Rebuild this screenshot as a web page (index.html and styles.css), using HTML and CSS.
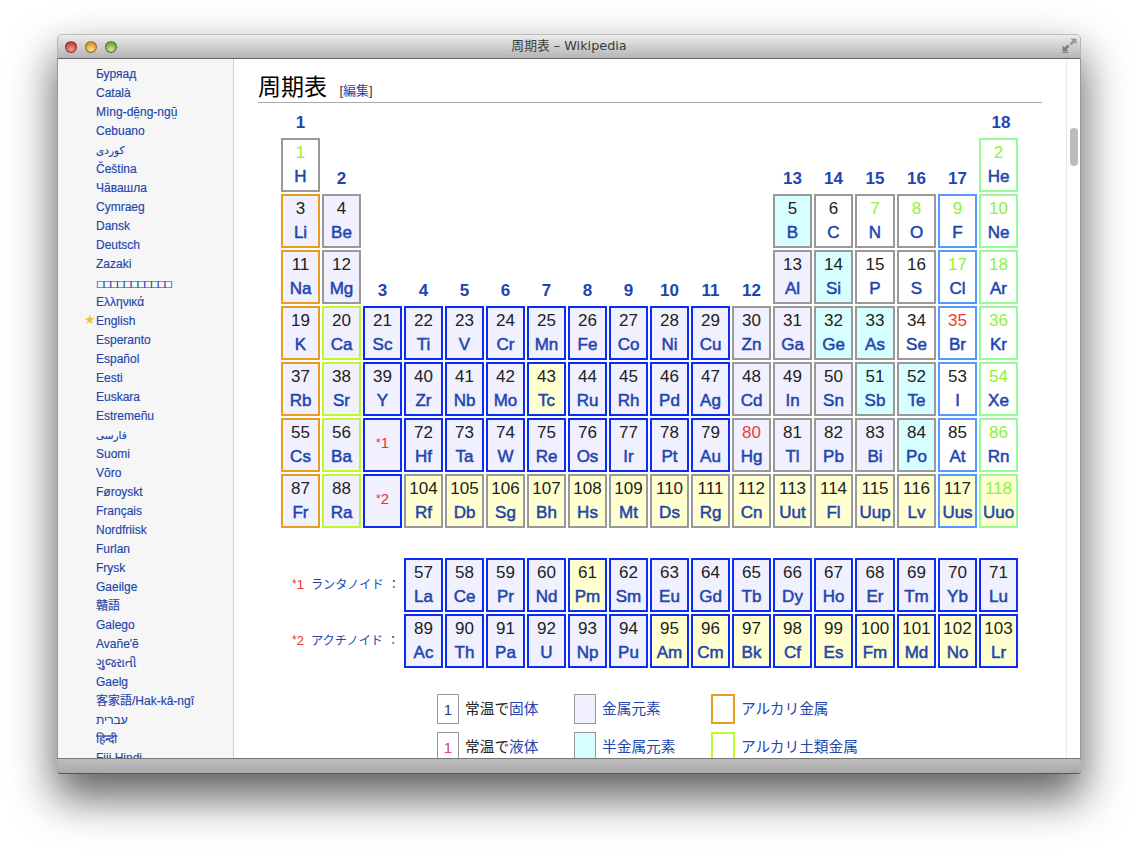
FILE: index.html
```html
<!DOCTYPE html>
<html lang="ja">
<head>
    <meta charset="UTF-8">
    <meta name="viewport" content="width=device-width, initial-scale=1.0">
    <title>周期表 – Wikipedia</title>
    <link rel="stylesheet" href="styles.css">
</head>
<body>
<div class="window">
    <header class="titlebar">
        <div class="lights">
            <span class="light red"></span>
            <span class="light yellow"></span>
            <span class="light green"></span>
        </div>
        <div class="title">周期表 – Wikipedia</div>
        <svg class="fullscreen" width="15" height="15" viewBox="0 0 15 15">
            <path d="M8.500 0.500H14.500V6.500L12.500 4.500 9.500 7.500 7.500 5.500 10.500 2.500Z" fill="#999"/>
            <path d="M6.500 13.500H0.500V7.500L2.500 9.500 5.500 6.500 7.500 8.500 4.500 11.500Z" fill="#7d7d7d"/>
            <path d="M0 14.500H6.500" stroke="#888" fill="none"/>
        </svg>
    </header>
    <div class="main">
        <nav class="sidebar">
            <ul class="langs">
                <li><a>Буряад</a></li>
                <li><a>Català</a></li>
                <li><a>Mìng-dĕ̤ng-ngṳ̄</a></li>
                <li><a>Cebuano</a></li>
                <li><a class="arabic">کوردی</a></li>
                <li><a>Čeština</a></li>
                <li><a>Чӑвашла</a></li>
                <li><a>Cymraeg</a></li>
                <li><a>Dansk</a></li>
                <li><a>Deutsch</a></li>
                <li><a>Zazaki</a></li>
                <li><a class="tofu">□□□□□□□□□□□</a></li>
                <li><a>Ελληνικά</a></li>
                <li class="featured"><span class="star">★</span><a>English</a></li>
                <li><a>Esperanto</a></li>
                <li><a>Español</a></li>
                <li><a>Eesti</a></li>
                <li><a>Euskara</a></li>
                <li><a>Estremeñu</a></li>
                <li><a class="arabic">فارسی</a></li>
                <li><a>Suomi</a></li>
                <li><a>Võro</a></li>
                <li><a>Føroyskt</a></li>
                <li><a>Français</a></li>
                <li><a>Nordfriisk</a></li>
                <li><a>Furlan</a></li>
                <li><a>Frysk</a></li>
                <li><a>Gaeilge</a></li>
                <li><a>贛語</a></li>
                <li><a>Galego</a></li>
                <li><a>Avañe'ẽ</a></li>
                <li><a>ગુજરાતી</a></li>
                <li><a>Gaelg</a></li>
                <li><a>客家語/Hak-kâ-ngî</a></li>
                <li><a>עברית</a></li>
                <li><a>हिन्दी</a></li>
                <li><a>Fiji Hindi</a></li>
            </ul>
        </nav>
        <main class="content">
            <h2 class="heading">周期表 <span class="edit">[<a>編集</a>]</span></h2>
            <div class="ptable">
                <!-- row 0 -->
                <a class="group">1</a><span class="sp16"></span><a class="group last">18</a>
                <!-- period 1 -->
                <div class="el gray"><span class="z gas">1</span><a>H</a></div>
                <a class="group">2</a><span class="sp10"></span>
                <a class="group">13</a><a class="group">14</a><a class="group">15</a><a class="group">16</a><a class="group">17</a>
                <div class="el noble"><span class="z gas">2</span><a>He</a></div>
                <!-- period 2 -->
                <div class="el alkali metal"><span class="z">3</span><a>Li</a></div>
                <div class="el gray metal"><span class="z">4</span><a>Be</a></div>
                <span class="sp10"></span>
                <div class="el gray semi"><span class="z">5</span><a>B</a></div>
                <div class="el gray"><span class="z">6</span><a>C</a></div>
                <div class="el gray"><span class="z gas">7</span><a>N</a></div>
                <div class="el gray"><span class="z gas">8</span><a>O</a></div>
                <div class="el halogen"><span class="z gas">9</span><a>F</a></div>
                <div class="el noble"><span class="z gas">10</span><a>Ne</a></div>
                <!-- period 3 -->
                <div class="el alkali metal"><span class="z">11</span><a>Na</a></div>
                <div class="el gray metal"><span class="z">12</span><a>Mg</a></div>
                <a class="group">3</a><a class="group">4</a><a class="group">5</a><a class="group">6</a><a class="group">7</a>
                <a class="group">8</a><a class="group">9</a><a class="group">10</a><a class="group">11</a><a class="group">12</a>
                <div class="el gray metal"><span class="z">13</span><a>Al</a></div>
                <div class="el gray semi"><span class="z">14</span><a>Si</a></div>
                <div class="el gray"><span class="z">15</span><a>P</a></div>
                <div class="el gray"><span class="z">16</span><a>S</a></div>
                <div class="el halogen"><span class="z gas">17</span><a>Cl</a></div>
                <div class="el noble"><span class="z gas">18</span><a>Ar</a></div>
                <!-- period 4 -->
                <div class="el alkali metal"><span class="z">19</span><a>K</a></div>
                <div class="el earth metal"><span class="z">20</span><a>Ca</a></div>
                <div class="el blue metal"><span class="z">21</span><a>Sc</a></div>
                <div class="el blue metal"><span class="z">22</span><a>Ti</a></div>
                <div class="el blue metal"><span class="z">23</span><a>V</a></div>
                <div class="el blue metal"><span class="z">24</span><a>Cr</a></div>
                <div class="el blue metal"><span class="z">25</span><a>Mn</a></div>
                <div class="el blue metal"><span class="z">26</span><a>Fe</a></div>
                <div class="el blue metal"><span class="z">27</span><a>Co</a></div>
                <div class="el blue metal"><span class="z">28</span><a>Ni</a></div>
                <div class="el blue metal"><span class="z">29</span><a>Cu</a></div>
                <div class="el gray metal"><span class="z">30</span><a>Zn</a></div>
                <div class="el gray metal"><span class="z">31</span><a>Ga</a></div>
                <div class="el gray semi"><span class="z">32</span><a>Ge</a></div>
                <div class="el gray semi"><span class="z">33</span><a>As</a></div>
                <div class="el gray"><span class="z">34</span><a>Se</a></div>
                <div class="el halogen"><span class="z liquid">35</span><a>Br</a></div>
                <div class="el noble"><span class="z gas">36</span><a>Kr</a></div>
                <!-- period 5 -->
                <div class="el alkali metal"><span class="z">37</span><a>Rb</a></div>
                <div class="el earth metal"><span class="z">38</span><a>Sr</a></div>
                <div class="el blue metal"><span class="z">39</span><a>Y</a></div>
                <div class="el blue metal"><span class="z">40</span><a>Zr</a></div>
                <div class="el blue metal"><span class="z">41</span><a>Nb</a></div>
                <div class="el blue metal"><span class="z">42</span><a>Mo</a></div>
                <div class="el blue unknown"><span class="z">43</span><a>Tc</a></div>
                <div class="el blue metal"><span class="z">44</span><a>Ru</a></div>
                <div class="el blue metal"><span class="z">45</span><a>Rh</a></div>
                <div class="el blue metal"><span class="z">46</span><a>Pd</a></div>
                <div class="el blue metal"><span class="z">47</span><a>Ag</a></div>
                <div class="el gray metal"><span class="z">48</span><a>Cd</a></div>
                <div class="el gray metal"><span class="z">49</span><a>In</a></div>
                <div class="el gray metal"><span class="z">50</span><a>Sn</a></div>
                <div class="el gray semi"><span class="z">51</span><a>Sb</a></div>
                <div class="el gray semi"><span class="z">52</span><a>Te</a></div>
                <div class="el halogen"><span class="z">53</span><a>I</a></div>
                <div class="el noble"><span class="z gas">54</span><a>Xe</a></div>
                <!-- period 6 -->
                <div class="el alkali metal"><span class="z">55</span><a>Cs</a></div>
                <div class="el earth metal"><span class="z">56</span><a>Ba</a></div>
                <div class="el blue metal ref"><span class="star-ref"><i>*</i>1</span></div>
                <div class="el blue metal"><span class="z">72</span><a>Hf</a></div>
                <div class="el blue metal"><span class="z">73</span><a>Ta</a></div>
                <div class="el blue metal"><span class="z">74</span><a>W</a></div>
                <div class="el blue metal"><span class="z">75</span><a>Re</a></div>
                <div class="el blue metal"><span class="z">76</span><a>Os</a></div>
                <div class="el blue metal"><span class="z">77</span><a>Ir</a></div>
                <div class="el blue metal"><span class="z">78</span><a>Pt</a></div>
                <div class="el blue metal"><span class="z">79</span><a>Au</a></div>
                <div class="el gray metal"><span class="z liquid">80</span><a>Hg</a></div>
                <div class="el gray metal"><span class="z">81</span><a>Tl</a></div>
                <div class="el gray metal"><span class="z">82</span><a>Pb</a></div>
                <div class="el gray metal"><span class="z">83</span><a>Bi</a></div>
                <div class="el gray semi"><span class="z">84</span><a>Po</a></div>
                <div class="el halogen"><span class="z">85</span><a>At</a></div>
                <div class="el noble"><span class="z gas">86</span><a>Rn</a></div>
                <!-- period 7 -->
                <div class="el alkali metal"><span class="z">87</span><a>Fr</a></div>
                <div class="el earth metal"><span class="z">88</span><a>Ra</a></div>
                <div class="el blue metal ref"><span class="star-ref"><i>*</i>2</span></div>
                <div class="el gray unknown"><span class="z">104</span><a>Rf</a></div>
                <div class="el gray unknown"><span class="z">105</span><a>Db</a></div>
                <div class="el gray unknown"><span class="z">106</span><a>Sg</a></div>
                <div class="el gray unknown"><span class="z">107</span><a>Bh</a></div>
                <div class="el gray unknown"><span class="z">108</span><a>Hs</a></div>
                <div class="el gray unknown"><span class="z">109</span><a>Mt</a></div>
                <div class="el gray unknown"><span class="z">110</span><a>Ds</a></div>
                <div class="el gray unknown"><span class="z">111</span><a>Rg</a></div>
                <div class="el gray unknown"><span class="z">112</span><a>Cn</a></div>
                <div class="el gray unknown"><span class="z">113</span><a>Uut</a></div>
                <div class="el gray unknown"><span class="z">114</span><a>Fl</a></div>
                <div class="el gray unknown"><span class="z">115</span><a>Uup</a></div>
                <div class="el gray unknown"><span class="z">116</span><a>Lv</a></div>
                <div class="el halogen unknown"><span class="z">117</span><a>Uus</a></div>
                <div class="el noble unknown"><span class="z gas">118</span><a>Uuo</a></div>
                <!-- spacer -->
                <span class="sp18"></span>
                <!-- lanthanides -->
                <div class="series"><span class="mark"><i>*</i>1</span><a>ランタノイド</a><span class="colon">：</span></div>
                <div class="el blue metal"><span class="z">57</span><a>La</a></div>
                <div class="el blue metal"><span class="z">58</span><a>Ce</a></div>
                <div class="el blue metal"><span class="z">59</span><a>Pr</a></div>
                <div class="el blue metal"><span class="z">60</span><a>Nd</a></div>
                <div class="el blue unknown"><span class="z">61</span><a>Pm</a></div>
                <div class="el blue metal"><span class="z">62</span><a>Sm</a></div>
                <div class="el blue metal"><span class="z">63</span><a>Eu</a></div>
                <div class="el blue metal"><span class="z">64</span><a>Gd</a></div>
                <div class="el blue metal"><span class="z">65</span><a>Tb</a></div>
                <div class="el blue metal"><span class="z">66</span><a>Dy</a></div>
                <div class="el blue metal"><span class="z">67</span><a>Ho</a></div>
                <div class="el blue metal"><span class="z">68</span><a>Er</a></div>
                <div class="el blue metal"><span class="z">69</span><a>Tm</a></div>
                <div class="el blue metal"><span class="z">70</span><a>Yb</a></div>
                <div class="el blue metal"><span class="z">71</span><a>Lu</a></div>
                <!-- actinides -->
                <div class="series"><span class="mark"><i>*</i>2</span><a>アクチノイド</a><span class="colon">：</span></div>
                <div class="el blue metal"><span class="z">89</span><a>Ac</a></div>
                <div class="el blue metal"><span class="z">90</span><a>Th</a></div>
                <div class="el blue metal"><span class="z">91</span><a>Pa</a></div>
                <div class="el blue metal"><span class="z">92</span><a>U</a></div>
                <div class="el blue metal"><span class="z">93</span><a>Np</a></div>
                <div class="el blue metal"><span class="z">94</span><a>Pu</a></div>
                <div class="el blue unknown"><span class="z">95</span><a>Am</a></div>
                <div class="el blue unknown"><span class="z">96</span><a>Cm</a></div>
                <div class="el blue unknown"><span class="z">97</span><a>Bk</a></div>
                <div class="el blue unknown"><span class="z">98</span><a>Cf</a></div>
                <div class="el blue unknown"><span class="z">99</span><a>Es</a></div>
                <div class="el blue unknown"><span class="z">100</span><a>Fm</a></div>
                <div class="el blue unknown"><span class="z">101</span><a>Md</a></div>
                <div class="el blue unknown"><span class="z">102</span><a>No</a></div>
                <div class="el blue unknown"><span class="z">103</span><a>Lr</a></div>
            </div>
            <div class="legend">
                <div class="key"><span class="swatch"><span class="solid">1</span></span><span>常温で<a>固体</a></span></div>
                <div class="key"><span class="swatch metal"></span><a>金属元素</a></div>
                <div class="key"><span class="swatch wide alkali"></span><a>アルカリ金属</a></div>
                <div class="key"><span class="swatch"><span class="liq">1</span></span><span>常温で<a>液体</a></span></div>
                <div class="key"><span class="swatch semi"></span><a>半金属元素</a></div>
                <div class="key"><span class="swatch wide earth"></span><a>アルカリ土類金属</a></div>
            </div>
        </main>
        <aside class="scrollbar"><div class="thumb"></div></aside>
    </div>
    <footer class="statusbar"></footer>
</div>
</body>
</html>
```

FILE: styles.css
```css
* {
    box-sizing: border-box;
}
html, body {
    height: 100%;
}
body {
    margin: 0;
    padding: 34px 0 0 57px;
    background: #fff;
    font-family: "Liberation Sans", "Noto Sans CJK JP", "DejaVu Sans", sans-serif;
    overflow: hidden;
}
a {
    color: #2245ad;
}

/* window */
.window {
    width: 1024px;
    height: 740px;
    display: flex;
    flex-direction: column;
    border-radius: 5px 5px 3px 3px;
    box-shadow: 0 22px 44px 2px rgba(0,0,0,0.62);
}
.titlebar {
    height: 25px;
    flex: none;
    display: flex;
    align-items: center;
    position: relative;
    background: linear-gradient(#ececec, #b4b4b4);
    border: 1px solid #b5b5b5;
    border-top-color: #bdbdbd;
    border-bottom: 1px solid #666;
    border-radius: 5px 5px 0 0;
}
.lights {
    display: flex;
    gap: 8px;
    padding-left: 7px;
}
.light {
    width: 12px;
    height: 12px;
    border-radius: 50%;
    border: 1px solid rgba(0,0,0,0.35);
}
.light.red {
    background: radial-gradient(circle at 50% 75%, #f3a09a, #c9433d 70%);
}
.light.yellow {
    background: radial-gradient(circle at 50% 75%, #fbe08a, #d5982c 70%);
}
.light.green {
    background: radial-gradient(circle at 50% 75%, #cfe89a, #76a540 70%);
}
.title {
    flex: 1;
    text-align: center;
    font-family: "DejaVu Sans", "Noto Sans CJK JP", sans-serif;
    font-size: 12.8px;
    line-height: 16px;
    color: #3a3a3a;
    padding: 0 59px 2px 0;
}
.fullscreen {
    position: absolute;
    top: 3px;
    right: 3px;
}
.main {
    flex: 1;
    min-height: 0;
    display: flex;
    overflow: hidden;
    background: #fff;
}
.statusbar {
    height: 16px;
    flex: none;
    background: linear-gradient(#bcbcbc, #aaa);
    border-top: 1px solid #777;
    border-bottom: 1px solid #555;
    border-radius: 0 0 3px 3px;
}

/* sidebar */
.sidebar {
    width: 177px;
    flex: none;
    background: #f6f6f6;
    border-right: 1px solid #b5d3ef;
    border-left: 1px solid #999;
    overflow: hidden;
}
.langs {
    list-style: none;
    margin: 0;
    padding: 6px 0 0 38px;
    font-size: 12px;
}
.langs li {
    height: 19px;
    line-height: 19px;
    white-space: nowrap;
    position: relative;
}
.langs a {
    -webkit-text-stroke: 0.15px #2245ad;
}
.star {
    position: absolute;
    left: -12px;
    top: -2px;
    color: #f2c230;
    font-size: 13px;
    font-family: "DejaVu Sans", sans-serif;
}
.tofu {
    font-family: "DejaVu Sans", sans-serif;
    font-size: 9.5px;
    font-weight: bold;
    letter-spacing: -2.2px;
}
.arabic {
    font-size: 10.5px;
}

/* article */
.content {
    flex: 1;
    min-width: 0;
    padding: 0 24px;
    overflow: hidden;
}
.heading {
    margin: 13px 0 0;
    height: 31px;
    font-size: 23px;
    line-height: 30px;
    font-weight: normal;
    color: #000;
    border-bottom: 1px solid #aaa;
    white-space: nowrap;
}
.edit {
    font-size: 13px;
    margin-left: 6px;
    color: #333;
}
.ptable {
    margin: 7px 0 0 23px;
    display: grid;
    grid-template-columns: repeat(14, 39px) 40px repeat(3, 39px);
    grid-template-rows: 26px repeat(7, 54px) 26px 54px 54px;
    gap: 2px;
}
.sp10 {
    grid-column: span 10;
}
.sp16 {
    grid-column: span 16;
}
.sp18 {
    grid-column: span 18;
}
.group {
    align-self: end;
    text-align: center;
    font-size: 17px;
    font-weight: bold;
    line-height: 26px;
}
.group.last {
    padding-left: 5px;
}
.el {
    border: 2px solid #999;
    padding-top: 1px;
    display: flex;
    flex-direction: column;
    align-items: center;
    font-size: 17px;
    line-height: 24px;
    white-space: nowrap;
    background: #fff;
}
.el a {
    -webkit-text-stroke: 0.5px #2245ad;
}
.z {
    color: #222;
}
.z.gas {
    color: #8df23a;
}
.z.liquid {
    color: #ee3c33;
}
.gray {
    border-color: #999;
}
.blue {
    border-color: #0a2cf5;
}
.alkali {
    border-color: #e89c20;
}
.earth {
    border-color: #bdf92b;
}
.halogen {
    border-color: #5598ff;
}
.noble {
    border-color: #98fb98;
}
.metal {
    background: #f0f0ff;
}
.semi {
    background: #d8ffff;
}
.unknown {
    background: #ffffcf;
}
.el.ref {
    justify-content: center;
    padding: 0 0 4px;
}
.star-ref, .mark {
    color: #ee3030;
}
.star-ref {
    font-size: 15px;
}
.star-ref i, .mark i {
    font-style: normal;
    font-size: 12px;
    vertical-align: 1px;
}
.series {
    grid-column: span 3;
    align-self: center;
    padding: 0 0 2px 11px;
    font-size: 12.2px;
    color: #333;
    white-space: nowrap;
}
.mark {
    font-size: 13px;
    margin-right: 7px;
}
.colon {
    margin-left: 4px;
}

/* legend */
.legend {
    margin: 26px 0 0 179px;
    display: grid;
    grid-template-columns: 137px 137px auto;
    row-gap: 8px;
    font-size: 14.7px;
    line-height: 31px;
    color: #222;
}
.key {
    display: flex;
    align-items: flex-start;
    gap: 6px;
    height: 30px;
    white-space: nowrap;
}
.swatch {
    width: 22px;
    height: 30px;
    flex: none;
    border: 1px solid #999;
    display: flex;
    align-items: center;
    justify-content: center;
    font-size: 15px;
}
.swatch.wide {
    width: 24px;
    border-width: 2px;
}
.swatch.alkali {
    border-color: #e89c20;
}
.swatch.earth {
    border-color: #bdf92b;
}
.solid {
    color: #2a3f7a;
}
.liq {
    color: #e0407a;
}

/* scrollbar */
.scrollbar {
    width: 15px;
    flex: none;
    background: #fff;
    border-left: 1px solid #e8e8e8;
    border-right: 1px solid #999;
    padding: 69px 2px 0 3px;
}
.thumb {
    height: 38px;
    border-radius: 4px;
    background: #bcbcbc;
}
```
